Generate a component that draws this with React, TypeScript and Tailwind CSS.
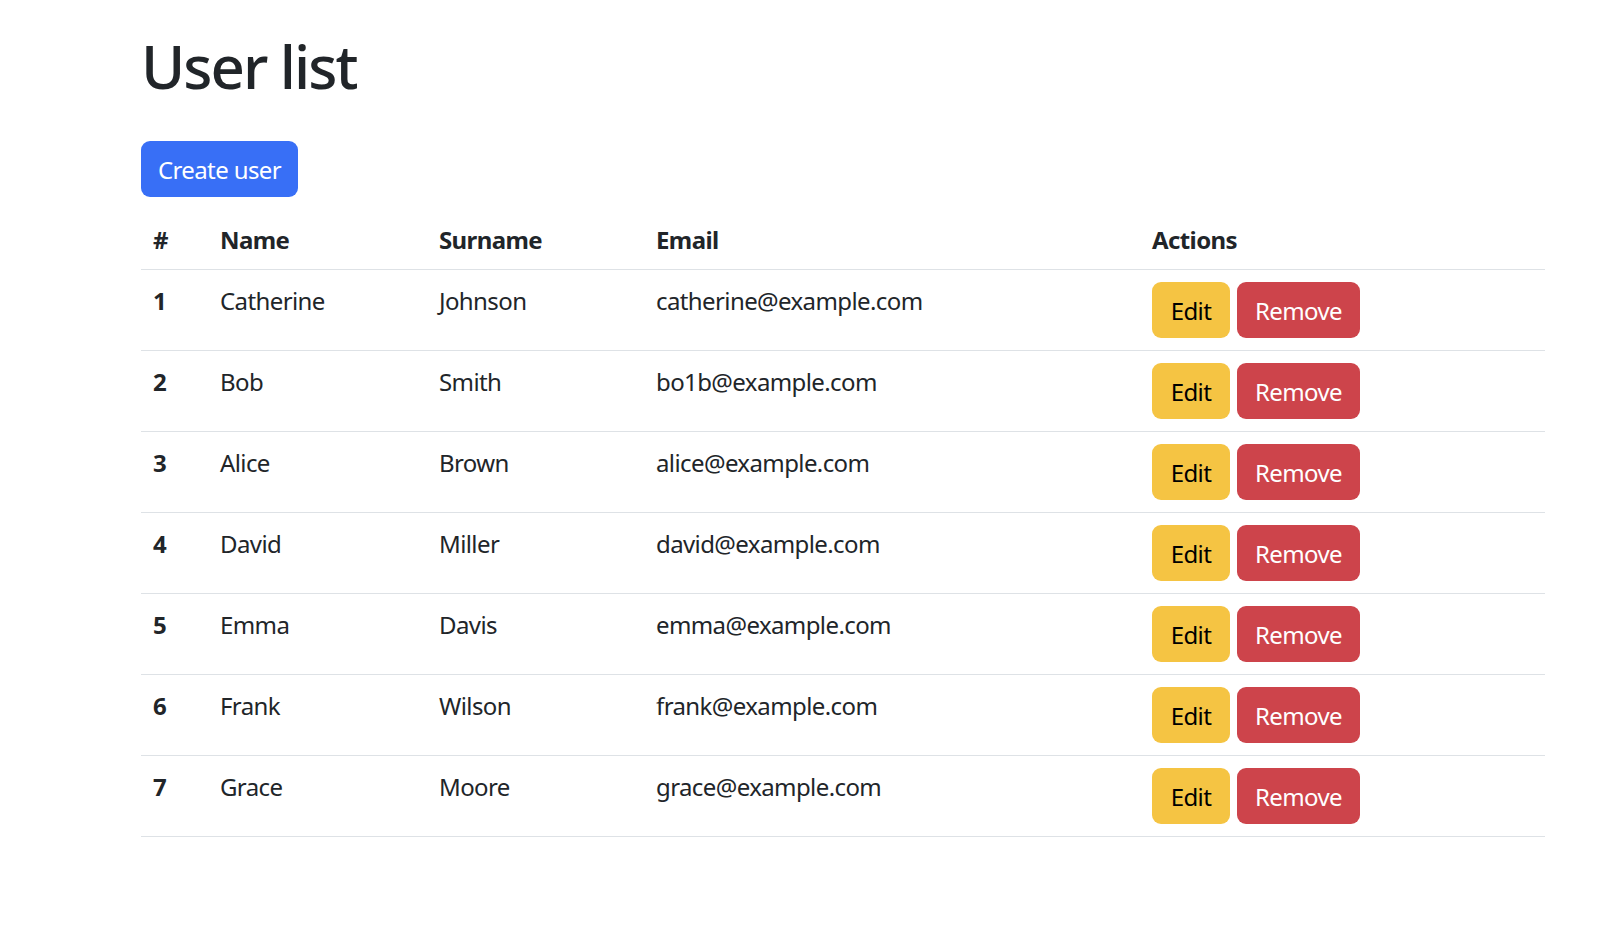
const users = [
  { id: 1, name: "Catherine", surname: "Johnson", email: "catherine@example.com" },
  { id: 2, name: "Bob", surname: "Smith", email: "bo1b@example.com" },
  { id: 3, name: "Alice", surname: "Brown", email: "alice@example.com" },
  { id: 4, name: "David", surname: "Miller", email: "david@example.com" },
  { id: 5, name: "Emma", surname: "Davis", email: "emma@example.com" },
  { id: 6, name: "Frank", surname: "Wilson", email: "frank@example.com" },
  { id: 7, name: "Grace", surname: "Moore", email: "grace@example.com" },
]

const App = () => {
  return (
    <div className="min-h-screen bg-white text-[#212529] font-['Noto_Sans',sans-serif] tracking-[-0.6px]">
      <div className="ml-[141px] w-[1404px] pt-[30px]">
        <h1 className="text-[60px] leading-[72px] font-medium tracking-[-2px] mb-[39px]">User list</h1>

        <button className="h-[56px] w-[157px] rounded-[9px] bg-[#386ff6] pt-[2px] text-white text-[24px] leading-[36px] mb-[12px]">
          Create user
        </button>

        <table className="w-full border-collapse text-[24px] leading-[36px]">
          <thead>
            <tr className="border-b border-[#dee2e6]">
              <th className="w-[67px] px-[12px] pt-[13px] pb-[11px] text-left font-bold">#</th>
              <th className="w-[219px] px-[12px] pt-[13px] pb-[11px] text-left font-bold">Name</th>
              <th className="w-[217px] px-[12px] pt-[13px] pb-[11px] text-left font-bold">Surname</th>
              <th className="w-[496px] px-[12px] pt-[13px] pb-[11px] text-left font-bold">Email</th>
              <th className="px-[12px] pt-[13px] pb-[11px] text-left font-bold">Actions</th>
            </tr>
          </thead>
          <tbody>
            {users.map((u) => (
              <tr key={u.id} className="border-b border-[#dee2e6]">
                <td className="px-[12px] pt-[13px] align-top font-bold">{u.id}</td>
                <td className="px-[12px] pt-[13px] align-top">{u.name}</td>
                <td className="px-[12px] pt-[13px] align-top">{u.surname}</td>
                <td className="px-[12px] pt-[13px] align-top">{u.email}</td>
                <td className="p-[12px] align-top">
                  <div className="flex gap-[7px]">
                    <button className="h-[56px] w-[78px] rounded-[9px] bg-[#f5c443] pt-[2px] text-black">Edit</button>
                    <button className="h-[56px] w-[123px] rounded-[9px] bg-[#cd444b] pt-[2px] text-white">Remove</button>
                  </div>
                </td>
              </tr>
            ))}
          </tbody>
        </table>
      </div>
    </div>
  )
}

export default App
